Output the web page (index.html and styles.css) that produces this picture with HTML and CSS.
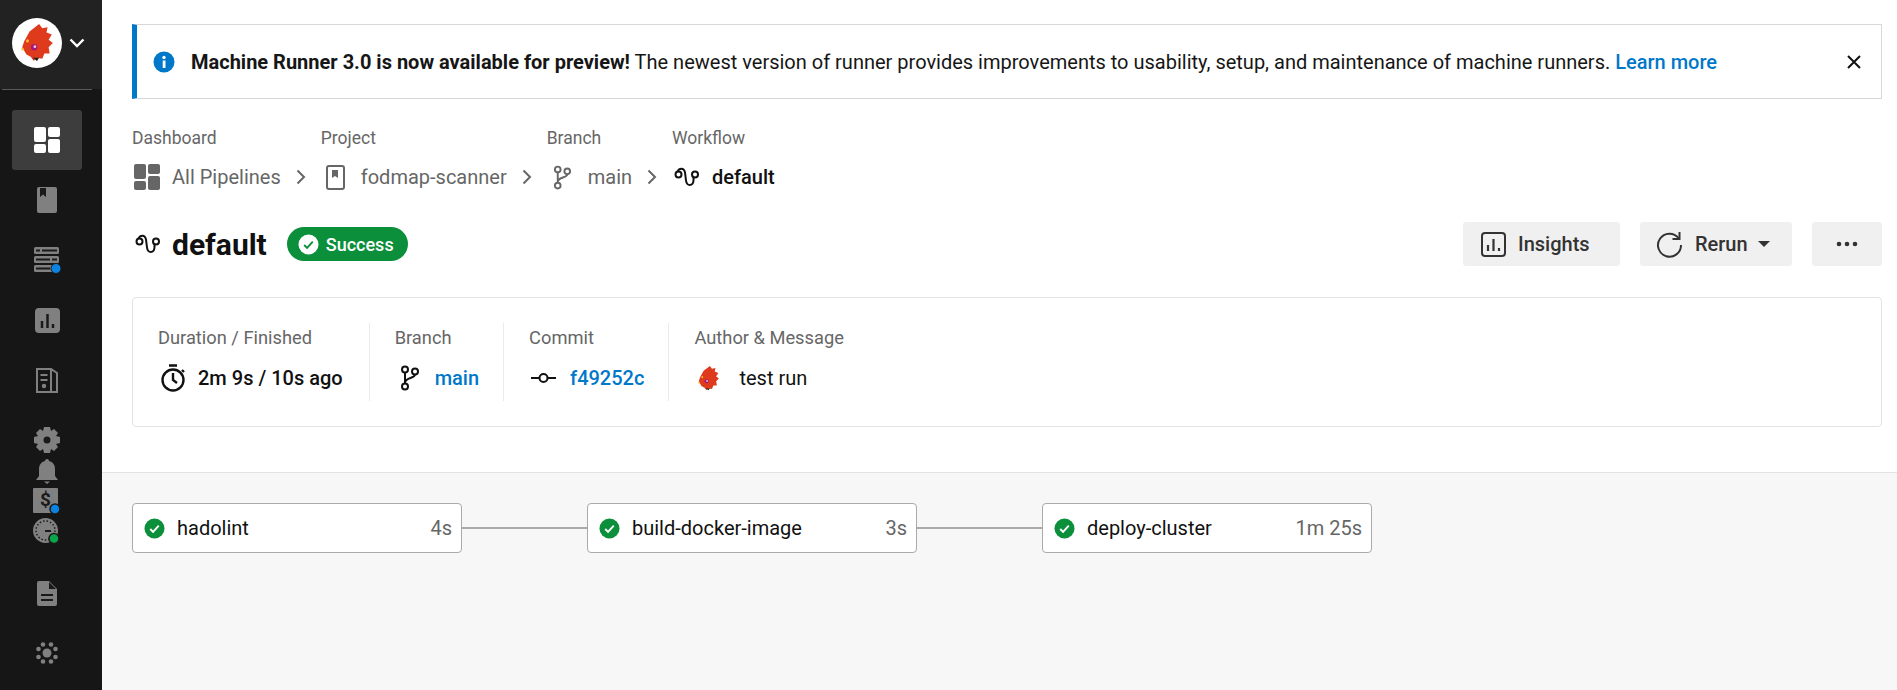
FILE: index.html
```html
<!DOCTYPE html>
<html>
  <head>
    <title>default - Workflow</title>
    <link rel="stylesheet" href="styles.css">
  </head>
  <body>
    <svg class="defs" width="0" height="0">
      <symbol id="workflow" viewBox="0 0 26 20">
        <circle cx="4.500" cy="7.500" r="3" fill="none" stroke="currentColor" stroke-width="2"/>
        <circle cx="21" cy="7.500" r="3" fill="none" stroke="currentColor" stroke-width="2"/>
        <path d="M3.500 4.500C5 1 10 0 11 5.500l1 8c.8 6 7 6 7.500 0v-4" fill="none" stroke="currentColor" stroke-width="2"/>
      </symbol>
      <symbol id="branch" viewBox="0 0 20 26">
        <circle cx="5" cy="4.500" r="3" fill="none" stroke="currentColor" stroke-width="2"/>
        <circle cx="15" cy="6.500" r="3" fill="none" stroke="currentColor" stroke-width="2"/>
        <circle cx="5" cy="21.500" r="3" fill="none" stroke="currentColor" stroke-width="2"/>
        <path d="M5 7.500v11M15 9.500c0 4-10 3-10 8" fill="none" stroke="currentColor" stroke-width="2"/>
      </symbol>
      <symbol id="check" viewBox="0 0 22 22">
        <circle cx="11" cy="11" r="10.500" fill="#0b8f3b"/>
        <path d="M6.500 11.500l3 3 6-6.500" fill="none" stroke="#fff" stroke-width="2"/>
      </symbol>
      <symbol id="dragon" viewBox="0 0 30 36">
        <path d="M17 0l3 4 5-1-1 5 5 2-3 5 4 3-4 4 1 6-5 0-2 5-6-1-2 3-3-4-4-2-4-7 2-6 5-9z" fill="#de3a1b"/>
        <circle cx="12.300" cy="22" r="3" fill="#a3187a"/>
        <circle cx="13" cy="21.500" r="1.300" fill="#f3c6dd"/>
        <circle cx="6" cy="16" r="1.500" fill="#f5b52a"/>
        <circle cx="1.500" cy="24" r="1.200" fill="#f5b52a"/>
        <path d="M11 32l6 0-2 3z" fill="#222"/>
      </symbol>
    </svg>

    <div class="page">
      <aside class="sidebar">
        <div class="org_switch">
          <span class="org_avatar"><svg width="32" height="38"><use href="#dragon"/></svg></span>
          <svg class="org_chevron" width="16" height="10" viewBox="0 0 16 10"><path d="M1.500 1.500L8 8l6.500-6.500" fill="none" stroke="#fff" stroke-width="2.400"/></svg>
        </div>
        <div class="org_rule"></div>
        <nav class="side_nav">
          <a class="nav_item active">
            <svg width="26" height="26" viewBox="0 0 26 26" fill="#fff"><rect width="12" height="15" rx="2"/><rect x="14" width="12" height="10" rx="2"/><rect y="17" width="12" height="9" rx="2"/><rect x="14" y="12" width="12" height="14" rx="2"/></svg>
          </a>
          <a class="nav_item">
            <svg width="20" height="26" viewBox="0 0 20 26"><rect width="20" height="26" rx="2" fill="#808080"/><path d="M3 1h6v9l-3-2.500-3 2.500z" fill="#1a1a1a"/></svg>
          </a>
          <a class="nav_item">
            <svg width="27" height="27" viewBox="0 0 27 27"><g fill="#808080"><rect y="0" width="25" height="7" rx="1.500"/><rect y="9" width="25" height="7" rx="1.500"/><rect y="18" width="25" height="7" rx="1.500"/></g><path d="M2 3.500h4M8 3.500h15M2 12.500h14M18 12.500h5M2 21.500h14" stroke="#1a1a1a" stroke-width="2"/><circle cx="22" cy="21.500" r="5" fill="#0a84e0" stroke="#1a1a1a"/></svg>
          </a>
          <a class="nav_item">
            <svg width="25" height="25" viewBox="0 0 25 25"><rect width="25" height="25" rx="4" fill="#808080"/><path d="M7 13v7M12.500 6v14M18 16v4" stroke="#1a1a1a" stroke-width="2.500"/></svg>
          </a>
          <a class="nav_item">
            <svg width="22" height="25" viewBox="0 0 22 25" fill="none" stroke="#808080" stroke-width="2"><path d="M1 1h14l6 4v19H1zM15 1v23"/><path d="M4.500 7h7M4.500 12h7"/><circle cx="8" cy="18" r="1.200" fill="#808080"/></svg>
          </a>
          <a class="nav_item gear_item">
            <svg width="26" height="26" viewBox="0 0 26 26"><path d="M10 0h6l1 4 3-2 4 4-2 3 4 1v6l-4 1 2 3-4 4-3-2-1 4h-6l-1-4-3 2-4-4 2-3-4-1v-6l4-1-2-3 4-4 3 2z" fill="#808080"/><circle cx="13" cy="13" r="3.500" fill="#1a1a1a"/></svg>
          </a>
          <a class="nav_item tight">
            <svg width="22" height="25" viewBox="0 0 22 25" fill="#808080"><path d="M11 0c1.500 0 2 1 2 2 4 1 6 4 6 8v7l3 4H0l3-4v-7c0-4 2-7 6-8 0-1 .5-2 2-2z"/><path d="M8 22.500h6l-3 2.500z"/></svg>
          </a>
          <a class="nav_item tight">
            <svg width="28" height="27" viewBox="0 0 28 27"><rect width="25" height="25" rx="1" fill="#808080"/><text class="dollar" x="7" y="18">$</text><circle cx="22" cy="21" r="5" fill="#0a84e0" stroke="#1a1a1a" stroke-width="1.500"/></svg>
          </a>
          <a class="nav_item tight">
            <svg width="28" height="27" viewBox="0 0 28 27"><circle cx="12.500" cy="12.500" r="12.500" fill="#808080"/><circle cx="12.500" cy="12.500" r="9.500" fill="none" stroke="#1a1a1a" stroke-width="1.500" stroke-dasharray="1.500 2"/><path d="M12 13h6" stroke="#1a1a1a" stroke-width="2"/><circle cx="21" cy="20.500" r="5" fill="#0ba64a" stroke="#1a1a1a" stroke-width="1.500"/></svg>
          </a>
          <a class="nav_item after_tight">
            <svg width="20" height="25" viewBox="0 0 20 25"><path d="M2 0h10l8 8v15a2 2 0 0 1-2 2H2a2 2 0 0 1-2-2V2a2 2 0 0 1 2-2z" fill="#808080"/><path d="M12 1v7h7z" fill="#1a1a1a"/><path d="M4 14h12M4 19h12" stroke="#1a1a1a" stroke-width="2"/></svg>
          </a>
          <a class="nav_item">
            <svg width="22" height="22" viewBox="0 0 22 22" fill="#808080"><circle cx="11" cy="11" r="4.500"/><circle cx="7" cy="2.500" r="2.300"/><circle cx="15" cy="2.500" r="2.300"/><circle cx="7" cy="19.500" r="2.300"/><circle cx="15" cy="19.500" r="2.300"/><circle cx="2.500" cy="7" r="2.300"/><circle cx="2.500" cy="15" r="2.300"/><circle cx="19.500" cy="7" r="2.300"/><circle cx="19.500" cy="15" r="2.300"/></svg>
          </a>
        </nav>
      </aside>

      <main class="content">
        <div class="top_section">
          <div class="banner">
            <svg class="banner_icon" width="22" height="22" viewBox="0 0 22 22"><circle cx="11" cy="11" r="10.500" fill="#0078ca"/><rect x="9.700" y="9.500" width="2.800" height="7.500" fill="#fff"/><circle cx="11" cy="6.500" r="1.700" fill="#fff"/></svg>
            <p class="banner_text"><b>Machine Runner 3.0 is now available for preview!</b> The newest version of runner provides improvements to usability, setup, and maintenance of machine runners. <a class="banner_link">Learn more</a></p>
            <svg class="banner_close" width="14" height="14" viewBox="0 0 14 14"><path d="M1 1l12 12M13 1L1 13" stroke="#111" stroke-width="2"/></svg>
          </div>

          <div class="crumbs">
            <div class="crumb">
              <span class="crumb_label">Dashboard</span>
              <span class="crumb_value crumb_dash">
                <svg width="26" height="26" viewBox="0 0 26 26" fill="#666"><rect width="12" height="15" rx="2"/><rect x="14" width="12" height="10" rx="2"/><rect y="17" width="12" height="9" rx="2"/><rect x="14" y="12" width="12" height="14" rx="2"/></svg>
                All Pipelines
              </span>
            </div>
            <svg class="crumb_arrow" width="10" height="16" viewBox="0 0 10 16"><path d="M1.500 1.500L8 8l-6.500 6.500" fill="none" stroke="#666" stroke-width="2"/></svg>
            <div class="crumb">
              <span class="crumb_label">Project</span>
              <span class="crumb_value">
                <svg width="19" height="25" viewBox="0 0 19 25"><rect x="1" y="1" width="17" height="23" rx="2" fill="none" stroke="#666" stroke-width="2"/><path d="M6 5h6v8l-3-2-3 2z" fill="#666"/></svg>
                fodmap-scanner
              </span>
            </div>
            <svg class="crumb_arrow" width="10" height="16" viewBox="0 0 10 16"><path d="M1.500 1.500L8 8l-6.500 6.500" fill="none" stroke="#666" stroke-width="2"/></svg>
            <div class="crumb">
              <span class="crumb_label">Branch</span>
              <span class="crumb_value crumb_git">
                <svg width="19" height="25"><use href="#branch"/></svg>
                main
              </span>
            </div>
            <svg class="crumb_arrow" width="10" height="16" viewBox="0 0 10 16"><path d="M1.500 1.500L8 8l-6.500 6.500" fill="none" stroke="#666" stroke-width="2"/></svg>
            <div class="crumb">
              <span class="crumb_label">Workflow</span>
              <span class="crumb_value current">
                <svg width="26" height="20"><use href="#workflow"/></svg>
                default
              </span>
            </div>
          </div>

          <div class="title_row">
            <svg class="title_icon" width="26" height="20"><use href="#workflow"/></svg>
            <h1 class="title">default</h1>
            <span class="badge">
              <svg width="21" height="21" viewBox="0 0 22 22"><circle cx="11" cy="11" r="10.500" fill="#fff"/><path d="M6.500 11.500l3 3 6-6.500" fill="none" stroke="#0b8f3b" stroke-width="2"/></svg>
              Success
            </span>
            <div class="actions">
              <button class="btn btn_insights">
                <svg width="25" height="25" viewBox="0 0 25 25" fill="none" stroke="#333" stroke-width="2"><rect x="1" y="1" width="23" height="23" rx="3"/><path d="M7 13v6M12.500 7v12M18 16v3" stroke-width="2.200"/></svg>
                Insights
              </button>
              <button class="btn btn_rerun">
                <svg width="27" height="27" viewBox="0 0 27 27" fill="none" stroke="#333" stroke-width="2"><path d="M22.500 7A11.500 11.500 0 1 0 25 14"/><path d="M23.500 1v7h-7"/></svg>
                Rerun
                <svg class="caret" width="12" height="6" viewBox="0 0 12 6"><path d="M0 0h12L6 6z" fill="#333"/></svg>
              </button>
              <button class="btn btn_more">
                <svg width="22" height="6" viewBox="0 0 22 6" fill="#333"><circle cx="3" cy="3" r="2.300"/><circle cx="11" cy="3" r="2.300"/><circle cx="19" cy="3" r="2.300"/></svg>
              </button>
            </div>
          </div>

          <div class="info_card">
            <div class="info_cell first">
              <span class="info_label">Duration / Finished</span>
              <span class="info_value val_duration">
                <svg width="26" height="28" viewBox="0 0 26 28" fill="none" stroke="#111" stroke-width="2.400"><circle cx="13" cy="16" r="10.500"/><path d="M9 1.500h8M13 9v7l4 3M22 6l2 2"/></svg>
                2m 9s / 10s ago
              </span>
            </div>
            <div class="info_cell">
              <span class="info_label">Branch</span>
              <span class="info_value val_branch">
                <svg width="20" height="26"><use href="#branch"/></svg>
                <a class="info_link">main</a>
              </span>
            </div>
            <div class="info_cell">
              <span class="info_label">Commit</span>
              <span class="info_value val_commit">
                <svg width="25" height="12" viewBox="0 0 25 12" fill="none" stroke="#111" stroke-width="2"><circle cx="12.500" cy="6" r="4"/><path d="M0 6h8.500M16.500 6h8.500"/></svg>
                <a class="info_link">f49252c</a>
              </span>
            </div>
            <div class="info_cell last">
              <span class="info_label">Author &amp; Message</span>
              <span class="info_value val_author">
                <svg width="21" height="25"><use href="#dragon"/></svg>
                test run
              </span>
            </div>
          </div>
        </div>

        <div class="graph">
          <div class="job">
            <svg width="21" height="21"><use href="#check"/></svg>
            <span class="job_name">hadolint</span>
            <span class="job_time">4s</span>
          </div>
          <span class="job_line"></span>
          <div class="job">
            <svg width="21" height="21"><use href="#check"/></svg>
            <span class="job_name">build-docker-image</span>
            <span class="job_time">3s</span>
          </div>
          <span class="job_line"></span>
          <div class="job">
            <svg width="21" height="21"><use href="#check"/></svg>
            <span class="job_name">deploy-cluster</span>
            <span class="job_time">1m 25s</span>
          </div>
        </div>
      </main>
    </div>
  </body>
</html>
```

FILE: styles.css
```css
* {
  box-sizing: border-box;
}

html, body {
  height: 100%;
}

body {
  margin: 0;
  font-family: Roboto, "Liberation Sans", sans-serif;
  color: #111;
  background-color: #fff;
  overflow: hidden;
}

.defs {
  display: block;
  height: 0;
}

.page {
  display: flex;
  height: 690px;
}

/* left nav */
.sidebar {
  width: 102px;
  flex-shrink: 0;
  background-color: #161616;
}

.org_switch {
  display: flex;
  align-items: center;
  gap: 7px;
  height: 89px;
  padding: 0 0 4px 12px;
  background-color: #222;
}

.org_rule {
  height: 1px;
  margin: 0 10px 0 2px;
  background-color: #5a5a5a;
}

.org_avatar {
  display: flex;
  align-items: center;
  justify-content: center;
  width: 50px;
  height: 50px;
  border-radius: 50%;
  background-color: #fff;
}

.side_nav {
  display: flex;
  flex-direction: column;
  align-items: center;
  padding: 20px 20px 0 12px;
}

.nav_item {
  display: flex;
  align-items: center;
  justify-content: center;
  width: 70px;
  height: 60px;
  flex-shrink: 0;
  border-radius: 3px;
}

.nav_item.active {
  background-color: #3d3d3d;
}

.gear_item {
  margin-bottom: -14px;
}

.nav_item.tight {
  height: 30px;
}

.after_tight {
  margin-top: 17px;
}

.dollar {
  font-size: 19px;
  font-weight: 700;
  fill: #1a1a1a;
}

/* main */
.content {
  flex: 1;
  display: flex;
  flex-direction: column;
  min-width: 0;
}

.top_section {
  padding: 24px 15px 45px 30px;
  border-bottom: 1px solid #e3e3e3;
}

.banner {
  display: flex;
  align-items: center;
  height: 75px;
  padding: 0 20px 0 16px;
  border: 1px solid #d8d8d8;
  border-left: 5px solid #0078ca;
}

.banner_icon {
  margin-right: 16px;
  flex-shrink: 0;
}

.banner_text {
  flex: 1;
  margin: 0;
  font-size: 20px;
  color: #161616;
}

.banner_link {
  font-weight: 500;
  color: #0078ca;
}

.crumbs {
  display: flex;
  align-items: flex-end;
  margin-top: 29px;
}

.crumb {
  display: flex;
  flex-direction: column;
  gap: 16px;
}

.crumb_label {
  font-size: 17.5px;
  line-height: 20px;
  color: #666;
}

.crumb_value {
  display: flex;
  align-items: center;
  gap: 16px;
  height: 26px;
  padding-left: 5px;
  font-size: 20px;
  color: #666;
}

.crumb_value.crumb_dash {
  gap: 12px;
  padding-left: 2px;
}

.crumb_value.crumb_git {
  padding-left: 6px;
}

.crumb_value.current {
  gap: 12px;
  padding-left: 2px;
  font-weight: 500;
  color: #111;
}

.crumb_arrow {
  margin: 0 15px 5px 15px;
}

.title_row {
  display: flex;
  align-items: center;
  height: 44px;
  margin-top: 32px;
}

.title_icon {
  margin-left: 3px;
}

.title {
  margin: 0 20px 0 11px;
  font-size: 30px;
  font-weight: 700;
}

.badge {
  display: flex;
  align-items: center;
  gap: 7px;
  height: 34px;
  padding: 0 14px 0 11px;
  border-radius: 17px;
  background-color: #0b8f3b;
  color: #fff;
  font-size: 18px;
  font-weight: 500;
}

.actions {
  display: flex;
  gap: 20px;
  margin-left: auto;
}

.btn {
  display: flex;
  align-items: center;
  height: 44px;
  border: 0;
  border-radius: 3px;
  background-color: #f0f0f0;
  color: #333;
  font-family: inherit;
  font-size: 20px;
  font-weight: 500;
}

.btn_insights {
  gap: 12px;
  width: 157px;
  padding: 0 0 0 18px;
}

.btn_rerun {
  gap: 12px;
  width: 152px;
  padding: 0 0 0 16px;
}

.caret {
  margin-left: -2px;
}

.btn_more {
  justify-content: center;
  width: 70px;
  padding: 0;
}

.info_card {
  display: flex;
  align-items: center;
  height: 130px;
  margin-top: 31px;
  border: 1px solid #e3e3e3;
  border-radius: 4px;
}

.info_cell {
  display: flex;
  flex-direction: column;
  gap: 16px;
  height: 78px;
  padding: 5px 24px 0 25px;
  border-right: 1px solid #eaeaea;
}

.info_cell.first {
  padding-right: 26px;
}

.info_cell.last {
  border-right: 0;
}

.info_label {
  font-size: 18.3px;
  line-height: 20px;
  color: #666;
}

.info_value {
  display: flex;
  align-items: center;
  height: 28px;
  font-size: 20px;
  font-weight: 500;
}

.val_duration {
  gap: 12px;
  padding-left: 2px;
}

.val_branch {
  gap: 15px;
  padding-left: 5px;
}

.val_commit {
  gap: 14px;
  padding-left: 2px;
}

.val_author {
  gap: 20px;
  padding-left: 4px;
  font-weight: 400;
}

.info_link {
  color: #0078ca;
}

/* job graph */
.graph {
  flex: 1;
  display: flex;
  align-items: flex-start;
  padding: 30px 30px;
  background-color: #f7f7f7;
}

.job {
  display: flex;
  align-items: center;
  width: 330px;
  height: 50px;
  padding: 0 9px 0 11px;
  border: 1px solid #aaa;
  border-radius: 4px;
  background-color: #fff;
}

.job_name {
  flex: 1;
  margin-left: 12px;
  font-size: 20px;
}

.job_time {
  font-size: 20px;
  color: #666;
}

.job_line {
  width: 125px;
  height: 2px;
  margin-top: 24px;
  background-color: #aaa;
}
```
